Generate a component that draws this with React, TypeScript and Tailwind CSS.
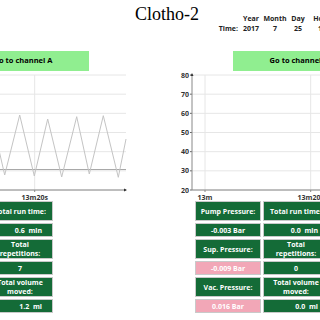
import React from "react";

const FONT = { fontFamily: '"Open Sans", "Noto Sans", Arial, sans-serif' };

const Y_TICKS = [80, 70, 60, 50, 40, 30, 20];
const TOP = 4;
const BOTTOM = 119;
const AXIS_X = 24;
const PLOT_END = 234;

function yFor(v: number) {
  return BOTTOM - ((v - 20) / 60) * (BOTTOM - TOP);
}

// screen coords of the visible wave, shifted into panel coords below
const WAVE = [
  [-84, 165], [-80.8, 175], [-65.8, 116], [-52.3, 176], [-37.3, 117], [-23.8, 175],
  [-8.8, 116], [4.7, 175], [19.7, 115], [34.3, 176], [47.7, 119], [61.7, 177],
  [76.7, 116.7], [89.3, 174], [103.3, 115.7], [118.3, 177.3], [126, 139],
];

function Chart({ wave }: { wave: boolean }) {
  return (
    <svg width="270" height="130" className="block overflow-visible">
      {Y_TICKS.map((t) => (
        <g key={t}>
          <line x1={AXIS_X} x2={PLOT_END} y1={yFor(t)} y2={yFor(t)} stroke="#e6e6e6" strokeWidth="1" />
          <line x1={AXIS_X - 2} x2={AXIS_X} y1={yFor(t)} y2={yFor(t)} stroke="#666" strokeWidth="1" />
          <text x={AXIS_X - 3} y={yFor(t) + 2.5} textAnchor="end" fontSize="7" fontWeight="700" fill="#333" style={FONT}>
            {t}
          </text>
        </g>
      ))}
      <line x1={37} x2={37} y1={TOP} y2={BOTTOM} stroke="#e6e6e6" />
      <line x1={142.7} x2={142.7} y1={TOP} y2={BOTTOM} stroke="#e6e6e6" />
      {wave && (
        <>
          <line x1={AXIS_X} x2={PLOT_END} y1={98.5} y2={98.5} stroke="#a8a8a8" strokeWidth="1" />
          <polyline
            points={WAVE.map(([x, y]) => `${x + 108},${y - 71}`).join(" ")}
            fill="none"
            stroke="#c4c4c4"
            strokeWidth="1"
          />
        </>
      )}
      <line x1={AXIS_X} x2={AXIS_X} y1={TOP - 1} y2={BOTTOM} stroke="#888" />
      <path d={`M${AXIS_X - 1.5} ${TOP + 1} L${AXIS_X} ${TOP - 2} L${AXIS_X + 1.5} ${TOP + 1} Z`} fill="#333" />
      <line x1={AXIS_X} x2={PLOT_END} y1={BOTTOM} y2={BOTTOM} stroke="#888" />
      <path d={`M${PLOT_END - 2} ${BOTTOM - 1.5} L${PLOT_END + 1} ${BOTTOM} L${PLOT_END - 2} ${BOTTOM + 1.5} Z`} fill="#333" />
      <line x1={37} x2={37} y1={BOTTOM} y2={BOTTOM + 2} stroke="#888" />
      <line x1={142.7} x2={142.7} y1={BOTTOM} y2={BOTTOM + 2} stroke="#888" />
      <text x={37} y={128.5} textAnchor="middle" fontSize="7" fontWeight="700" fill="#333" style={FONT}>
        13m
      </text>
      <text x={142.7} y={128.5} textAnchor="middle" fontSize="7" fontWeight="700" fill="#333" style={FONT}>
        13m20s
      </text>
    </svg>
  );
}

function Box({ children, tall, pink, right }: { children: React.ReactNode; tall?: boolean; pink?: boolean; right?: boolean }) {
  return (
    <div
      className={`w-[66px] border border-[#c9c9c9] flex items-center text-[7px] font-bold leading-[9px] text-white ${
        tall ? "h-[20px]" : "h-[14px]"
      } ${pink ? "bg-[#f2a7b7]" : "bg-[#146b37]"} ${right ? "justify-end pr-[10px]" : "justify-center text-center"}`}
    >
      <span>{children}</span>
    </div>
  );
}

function Panel({ channel, wave, stats }: { channel: string; wave: boolean; stats: string[] }) {
  return (
    <div className="w-[270px] shrink-0">
      <button className="ml-[65px] w-[132px] h-[20px] bg-[#90ee90] text-[7.5px] font-bold text-black flex items-center justify-center">
        Go to channel {channel}
      </button>
      <Chart wave={wave} />
      <div className="flex gap-[2px] ml-[27px]">
        <div className="flex flex-col gap-[2px]">
          <Box tall>Pump Pressure:</Box>
          <Box>-0.003 Bar</Box>
          <Box tall>Sup. Pressure:</Box>
          <Box pink>-0.009 Bar</Box>
          <Box tall>Vac. Pressure:</Box>
          <Box pink>0.016 Bar</Box>
        </div>
        <div className="flex flex-col gap-[2px]">
          <Box tall>Total run time:</Box>
          <Box right>{stats[0]}&nbsp;&nbsp;min</Box>
          <Box tall>
            Total
            <br />
            repetitions:
          </Box>
          <Box>{stats[1]}</Box>
          <Box tall>
            Total volume
            <br />
            moved:
          </Box>
          <Box right>{stats[2]}&nbsp;&nbsp;ml</Box>
        </div>
      </div>
    </div>
  );
}

export default function App() {
  return (
    <div className="w-[320px] h-[320px] overflow-hidden bg-white" style={FONT}>
      <div className="h-[51px] flex items-start">
        <h1
          className="ml-[135px] mt-[5px] text-[18px] leading-[18px] font-normal text-black w-[81px] shrink-0"
          style={{ fontFamily: '"Liberation Serif", "Times New Roman", serif' }}
        >
          Clotho-2
        </h1>
        <div className="mt-[14px] text-[7px] font-bold leading-[10px] text-[#222] flex shrink-0">
          <div className="w-[24px] text-right pr-[2px] shrink-0">
            <div>&nbsp;</div>
            <div>Time:</div>
          </div>
          {[
            ["Year", "2017", "w-[22px]"],
            ["Month", "7", "w-[26px]"],
            ["Day", "25", "w-[20px]"],
            ["Hour", "13", "w-[28px]"],
          ].map(([h, v, w]) => (
            <div key={h} className={`${w} text-center shrink-0`}>
              <div>{h}</div>
              <div>{v}</div>
            </div>
          ))}
        </div>
      </div>
      <div className="flex gap-[6px] -ml-[108px]">
        <Panel channel="A" wave stats={["0.6", "7", "1.2"]} />
        <Panel channel="B" wave={false} stats={["0.0", "0", "0.0"]} />
      </div>
    </div>
  );
}
